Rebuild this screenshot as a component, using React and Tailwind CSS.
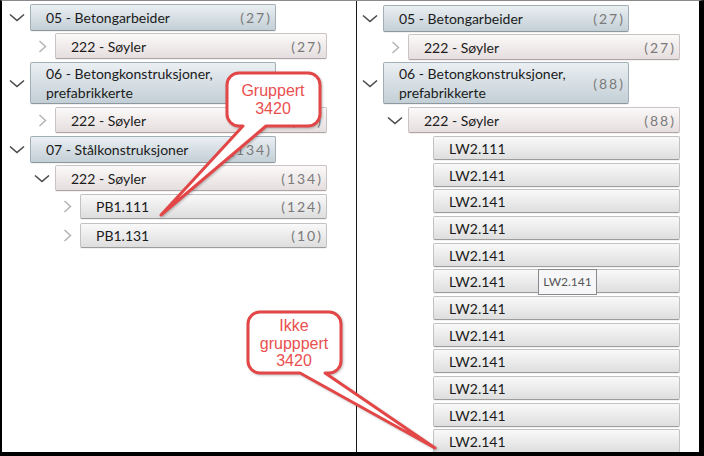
import React from 'react';

const ChevronDown = () => (
  <svg width="16" height="9" viewBox="0 0 16 9" className="block">
    <polyline points="1,1.5 8,7.5 15,1.5" fill="none" stroke="#4a4a4a" strokeWidth="1.6" />
  </svg>
);

const ChevronRight = () => (
  <svg width="9" height="13" viewBox="0 0 9 13" className="block">
    <polyline points="1.5,1 7.5,6.5 1.5,12" fill="none" stroke="#b4b4b4" strokeWidth="1.5" />
  </svg>
);

const boxStyles = {
  0: 'w-[246px] bg-gradient-to-b from-[#eaeff2] to-[#c3cfd6] border-[#a3afb6] border-b-[#8c979e]',
  1: 'w-[272px] bg-gradient-to-b from-[#fbf9f9] to-[#e6dede] border-[#cbc3c3] border-b-[#ada5a5]',
  2: 'w-[247px] bg-gradient-to-b from-[#f9f9f9] to-[#dedede] border-[#c2c2c2] border-b-[#9c9c9c]',
};

const indent = { 0: 'ml-0', 1: 'ml-[25px]', 2: 'ml-[50px]' };

const Row = ({ level, icon, label, count, tall, h = 'h-[26px]', mb = 'mb-[3px]' }) => (
  <div className={`flex items-center ${indent[level]} ${mb}`}>
    <div className="w-[26px] flex justify-center items-center">
      {icon === 'down' && <ChevronDown />}
      {icon === 'right' && <ChevronRight />}
    </div>
    <div className={`${boxStyles[level]} ${tall ? 'h-[42px]' : h} border rounded-[2px] flex items-center justify-between pl-[15px] pr-[3px] shadow-[0_1px_0_rgba(0,0,0,0.05)]`}>
      <span className="text-[14px] leading-[19px] text-[#1b1b1b] whitespace-pre-line">{label}</span>
      {count && <span className="text-[14px] text-[#7a7a7a] tracking-[2px]">({count})</span>}
    </div>
  </div>
);

const lwRows = ['LW2.111', ...Array(11).fill('LW2.141')];

export default function App() {
  return (
    <div className="w-[704px] h-[456px] overflow-hidden bg-white relative border-l-2 border-t border-r-[5px] border-b-4 border-l-black border-r-black border-b-black border-t-[#8a8a8a]" style={{ fontFamily: 'Lato, "Noto Sans", sans-serif' }}>
      <div className="flex h-full">
        {/* left tree: grouped */}
        <div className="w-[354px] pl-[2px] pt-[3px] shrink-0">
          <Row level={0} icon="down" label="05 - Betongarbeider" count="27" h="h-[27px]" mb="mb-[2px]" />
          <Row level={1} icon="right" label="222 - Søyler" count="27" />
          <Row level={0} icon="down" label={'06 - Betongkonstruksjoner,\nprefabrikkerte'} tall />
          <Row level={1} icon="right" label="222 - Søyler" count="27" />
          <Row level={0} icon="down" label="07 - Stålkonstruksjoner" count="134" h="h-[27px]" mb="mb-[2px]" />
          <Row level={1} icon="down" label="222 - Søyler" count="134" />
          <Row level={2} icon="right" label="PB1.111" count="124" h="h-[25px]" mb="mb-[4px]" />
          <Row level={2} icon="right" label="PB1.131" count="10" h="h-[25px]" />
        </div>
        <div className="w-px bg-[#1a1a1a] shrink-0" />
        {/* right tree: not grouped */}
        <div className="flex-1 pt-[4px]">
          <Row level={0} icon="down" label="05 - Betongarbeider" count="27" h="h-[27px]" mb="mb-[2px]" />
          <Row level={1} icon="right" label="222 - Søyler" count="27" mb="mb-[2px]" />
          <Row level={0} icon="down" label={'06 - Betongkonstruksjoner,\nprefabrikkerte'} count="88" tall />
          <Row level={1} icon="down" label="222 - Søyler" count="88" mb="mb-[3px]" />
          {lwRows.map((t, i) => (
            <div key={i} className="relative">
              <Row level={2} label={t} h="h-[24px]" mb={i % 3 === 1 ? 'mb-[2px]' : 'mb-[3px]'} />
              {i === 5 && (
                <div className="absolute left-[181px] top-0 w-[59px] h-[26px] border border-[#8a8a8a] bg-[#f6f6f8] flex items-center justify-center text-[12px] text-[#555]">
                  LW2.141
                </div>
              )}
            </div>
          ))}
        </div>
      </div>

      {/* callouts */}
      <svg className="absolute left-[-2px] top-[-1px] pointer-events-none" width="704" height="456" viewBox="0 0 704 456">
        <g style={{ filter: 'drop-shadow(1px 1px 1px rgba(0,0,0,0.25))' }}>
          <path d="M 239 73 H 308 A 12 12 0 0 1 320 85 V 114 A 12 12 0 0 1 308 126 H 266 L 161 215 L 243 126 H 239 A 12 12 0 0 1 227 114 V 85 A 12 12 0 0 1 239 73 Z" fill="#fff" stroke="#e24646" strokeWidth="3" strokeLinejoin="round" />
          <path d="M 260 312 H 329 A 12 12 0 0 1 341 324 V 361 A 12 12 0 0 1 329 373 H 325 L 435 448 L 300 373 H 260 A 12 12 0 0 1 248 361 V 324 A 12 12 0 0 1 260 312 Z" fill="#fff" stroke="#e24646" strokeWidth="3" strokeLinejoin="round" />
        </g>
        <g fill="#ea4f4f" fontSize="16" textAnchor="middle" style={{ fontFamily: '"Liberation Sans", Arial, sans-serif' }}>
          <text x="273" y="96">Gruppert</text>
          <text x="273" y="114">3420</text>
          <text x="294" y="331">Ikke</text>
          <text x="294" y="349">grupppert</text>
          <text x="294" y="366">3420</text>
        </g>
      </svg>
    </div>
  );
}
